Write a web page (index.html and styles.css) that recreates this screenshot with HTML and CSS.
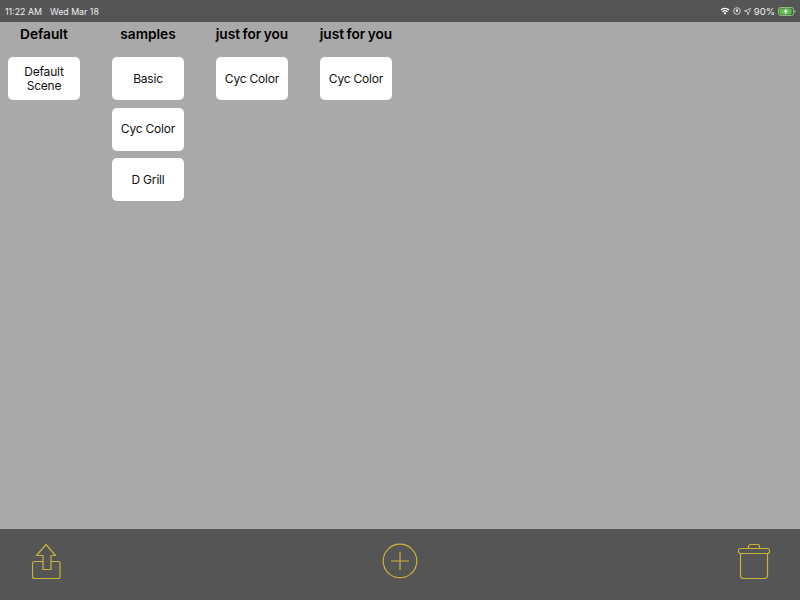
FILE: index.html
```html
<!DOCTYPE html>
<html lang="en">
<head>
<meta charset="utf-8">
<title>Scenes</title>
<link rel="stylesheet" href="styles.css">
</head>
<body>
<div class="app">
  <header class="status">
    <div class="status-left"><span>11:22 AM</span><span>Wed Mar 18</span></div>
    <div class="status-right">
      <svg class="si" width="10" height="8" viewBox="0 0 11 9"><path d="M5.500 8.600 3.900 6.700a2.400 2.400 0 0 1 3.200 0zM3.200 5.900 2.300 4.800a4.900 4.900 0 0 1 6.400 0L7.800 5.900a3.500 3.500 0 0 0-4.600 0zM1.600 4 .5 2.800a7.500 7.500 0 0 1 10 0L9.400 4a6 6 0 0 0-7.800 0z" fill="#fff"/></svg>
      <svg class="si" width="8" height="8" viewBox="0 0 9 9"><circle cx="4.500" cy="4.500" r="3.700" fill="none" stroke="#ddd" stroke-width="1"/><path d="M4.500 2.200a1.400 1.400 0 0 1 1.100 2.200v1.200H3.400V4.400A1.400 1.400 0 0 1 4.500 2.200z" fill="#ddd"/></svg>
      <svg class="si" width="7" height="7" viewBox="0 0 8 8"><path d="M7.600.4 4.600 7.600 3.800 4.200.4 3.400z" fill="none" stroke="#ddd" stroke-width=".9"/></svg>
      <span class="pct">90%</span>
      <svg class="si" width="18" height="9" viewBox="0 0 18 9"><rect x=".5" y=".5" width="15" height="8" rx="2" fill="none" stroke="#8fbf7f"/><rect x="1.500" y="1.500" width="12" height="6" rx="1" fill="#5fc04a"/><rect x="16.400" y="3" width="1.100" height="3" fill="#999"/><path d="M8.500 1 5.600 5h1.900L7 8l3-4.200H8z" fill="#fff"/></svg>
    </div>
  </header>
  <main class="board">
    <section class="col">
      <h2>Default</h2>
      <button class="tile">Default Scene</button>
    </section>
    <section class="col">
      <h2>samples</h2>
      <button class="tile">Basic</button>
      <button class="tile">Cyc Color</button>
      <button class="tile">D Grill</button>
    </section>
    <section class="col">
      <h2>just for you</h2>
      <button class="tile">Cyc Color</button>
    </section>
    <section class="col">
      <h2>just for you</h2>
      <button class="tile">Cyc Color</button>
    </section>
  </main>
  <footer class="toolbar">
    <svg class="tool" width="30" height="36" viewBox="0 0 30 36" fill="none" stroke="#c8b23c" stroke-width="1.200" stroke-linejoin="round"><path d="M11 26.500V12.500H4.500L14 1.500l9.500 11H19v14z"/><path d="M11 18.500H2.500a2 2 0 0 0-2 2v13a2 2 0 0 0 2 2h23.500a2 2 0 0 0 2-2v-13a2 2 0 0 0-2-2H19"/></svg>
    <svg class="tool" width="36" height="36" viewBox="0 0 36 36" fill="none" stroke="#c8b23c" stroke-width="1.200"><circle cx="18" cy="18" r="16.800"/><path d="M9 18h18M18 9v18"/></svg>
    <svg class="tool" width="34" height="36" viewBox="0 0 34 36" fill="none" stroke="#c8b23c" stroke-width="1.200" stroke-linejoin="round"><rect x=".5" y="5.500" width="31" height="5" rx="2"/><path d="M10.500 5.500V3.500a2 2 0 0 1 2-2h7a2 2 0 0 1 2 2v2"/><path d="M2.500 10.500v22a3 3 0 0 0 3 3h21a3 3 0 0 0 3-3v-22"/></svg>
  </footer>
</div>
</body>
</html>
```

FILE: styles.css
```css
* { box-sizing: border-box; }
html, body { margin: 0; height: 100%; }
body { font-family: Inter, "Liberation Sans", sans-serif; background: #a9a9a9; color: #000; }
.app { width: 800px; height: 600px; display: flex; flex-direction: column; overflow: hidden; }
.status { height: 22px; background: #555; color: #eee; font-size: 8.800px; display: flex; justify-content: space-between; align-items: center; padding: 0 4px 0 5px; }
.status-left { display: flex; gap: 8px; }
.status-right { display: flex; align-items: center; gap: 3px; }
.si { display: block; }
.pct { font-size: 9.500px; }
.board { flex: 1; display: flex; gap: 32px; padding: 0 8px; align-items: flex-start; }
.col { width: 72px; display: flex; flex-direction: column; gap: 7.500px; align-items: center; }
.col h2 { margin: 0 0 3.500px; height: 24px; width: 100%; display: flex; justify-content: center; align-items: center; white-space: nowrap; font-size: 13.700px; font-weight: 600; word-spacing: -1px; }
.tile { width: 72px; height: 43px; border: 0; border-radius: 5px; background: #fff; color: #111; font: 400 12px/14.500px Inter, "Liberation Sans", sans-serif; letter-spacing: -0.200px; padding: 1px 6px 0; }
.toolbar { height: 71px; background: #555; display: flex; justify-content: space-between; align-items: center; padding: 0 28px 8px 32px; }
.tool { display: block; }
```
